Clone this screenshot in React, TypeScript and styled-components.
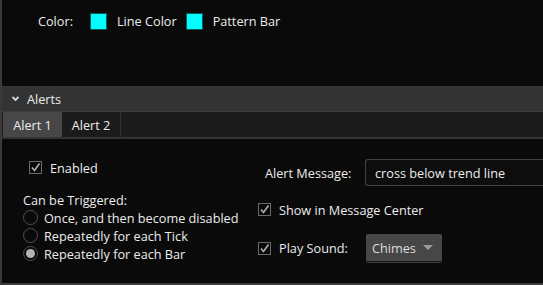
import React from 'react';
import styled, { createGlobalStyle } from 'styled-components';

const GlobalStyle = createGlobalStyle`
  html, body {
    margin: 0;
    padding: 0;
    background: #0a0a0a;
  }
  body {
    font-family: "Open Sans", "Noto Sans", sans-serif;
    font-size: 12.7px;
    color: #ececec;
  }
`;

const Frame = styled.div`
  width: 543px;
  height: 285px;
  box-sizing: border-box;
  border-left: 2px solid #3a3a3a;
  border-bottom: 2px solid #3a3a3a;
  background: #0a0a0a;
  display: flex;
  flex-direction: column;
  overflow: hidden;
`;

const ColorRow = styled.div`
  height: 86px;
  box-sizing: border-box;
  padding: 13px 0 0 36px;
  display: flex;
  align-items: flex-start;
`;

const ColorLabel = styled.span`
  line-height: 17px;
  margin-right: 17px;
`;

const Swatch = styled.div<{ $color: string }>`
  width: 17px;
  height: 17px;
  box-sizing: border-box;
  background: ${p => p.$color};
  border: 1px solid #0b5a5a;
  margin-right: 10px;
`;

const SwatchLabel = styled.span`
  line-height: 17px;
  margin-right: 9px;
`;

const SectionHeader = styled.div`
  height: 25px;
  background: #333333;
  display: flex;
  align-items: center;
  padding-left: 9px;
  gap: 7px;
  border-bottom: 1px solid #3d3d3d;
`;

const TabBar = styled.div`
  height: 25px;
  background: #1b1b1b;
  display: flex;
  border-bottom: 2px solid #333333;
`;

const Tab = styled.div<{ $active?: boolean }>`
  width: 59px;
  box-sizing: border-box;
  display: flex;
  align-items: center;
  justify-content: center;
  background: ${p => (p.$active ? '#474747' : 'transparent')};
  border-right: ${p => (p.$active ? 'none' : '1px solid #333')};
  margin-left: ${p => (p.$active ? '1px' : '0')};
`;

const Content = styled.div`
  display: flex;
  flex: 1;
`;

const LeftColumn = styled.div`
  width: 235px;
  padding: 21px 0 0 21px;
  display: flex;
  flex-direction: column;
`;

const RightColumn = styled.div`
  flex: 1;
  padding: 20px 0 0 0;
  display: flex;
  flex-direction: column;
`;

const CheckRow = styled.label<{ $indent?: number }>`
  display: flex;
  align-items: center;
  gap: 8px;
  height: 15px;
  padding-left: ${p => p.$indent ?? 0}px;
`;

const CheckBox = styled.span`
  width: 13px;
  height: 13px;
  box-sizing: border-box;
  border: 1px solid #6a6a6a;
  display: inline-flex;
  align-items: center;
  justify-content: center;
`;

const GroupTitle = styled.div`
  margin-top: 17px;
  line-height: 16px;
`;

const RadioRow = styled.div`
  display: flex;
  align-items: center;
  gap: 6px;
  height: 17px;
  margin-top: 1px;
`;

const Radio = styled.span<{ $checked?: boolean }>`
  width: 15px;
  height: 15px;
  box-sizing: border-box;
  border-radius: 50%;
  border: 1px solid #505050;
  display: inline-flex;
  align-items: center;
  justify-content: center;
  &::after {
    content: '';
    width: 9px;
    height: 9px;
    border-radius: 50%;
    background: ${p => (p.$checked ? '#b4b4b4' : 'transparent')};
  }
`;

const MessageRow = styled.div`
  display: flex;
  align-items: center;
`;

const FieldLabel = styled.span<{ $width: number; $pad?: number }>`
  width: ${p => p.$width}px;
  padding-left: ${p => p.$pad ?? 0}px;
  flex-shrink: 0;
`;

const TextBox = styled.div`
  flex: 1;
  height: 27px;
  box-sizing: border-box;
  border: 1px solid #424242;
  border-right: none;
  border-radius: 3px 0 0 3px;
  background: #0d0d0d;
  display: flex;
  align-items: center;
  padding-left: 9px;
`;

const SelectBox = styled.div`
  width: 76px;
  height: 28px;
  box-sizing: border-box;
  background: #474747;
  border-radius: 2px;
  border-bottom: 1px solid #1a1a1a;
  box-shadow: 0 1px 0 #3a3a3a;
  display: flex;
  align-items: center;
  justify-content: space-between;
  padding: 0 9px 0 6px;
  color: #dcdcdc;
`;

const Caret = styled.span`
  width: 0;
  height: 0;
  border-left: 5px solid transparent;
  border-right: 5px solid transparent;
  border-top: 5px solid #9a9a9a;
`;

const Check = () => (
  <CheckBox>
    <svg width="11" height="11" viewBox="0 0 11 11">
      <path d="M2 5.5 L4.5 8.5 L9.5 1.5" fill="none" stroke="#b0b0b0" strokeWidth="1.6" />
    </svg>
  </CheckBox>
);

const Chevron = () => (
  <svg width="9" height="9" viewBox="0 0 9 9">
    <path d="M1.5 3 L4.5 6 L7.5 3" fill="none" stroke="#d8d8d8" strokeWidth="1.8" />
  </svg>
);

const App: React.FC = () => {
  return (
    <>
      <GlobalStyle />
      <Frame>
        <ColorRow>
          <ColorLabel>Color:</ColorLabel>
          <Swatch $color="#00ffff" />
          <SwatchLabel>Line Color</SwatchLabel>
          <Swatch $color="#00ffff" />
          <SwatchLabel>Pattern Bar</SwatchLabel>
        </ColorRow>

        <SectionHeader>
          <Chevron />
          <span>Alerts</span>
        </SectionHeader>

        <TabBar>
          <Tab $active>Alert 1</Tab>
          <Tab>Alert 2</Tab>
        </TabBar>

        <Content>
          <LeftColumn>
            <CheckRow $indent={6}>
              <Check />
              Enabled
            </CheckRow>
            <GroupTitle>Can be Triggered:</GroupTitle>
            <RadioRow>
              <Radio />
              Once, and then become disabled
            </RadioRow>
            <RadioRow>
              <Radio />
              Repeatedly for each Tick
            </RadioRow>
            <RadioRow>
              <Radio $checked />
              Repeatedly for each Bar
            </RadioRow>
          </LeftColumn>

          <RightColumn>
            <MessageRow>
              <FieldLabel $width={100} $pad={7}>Alert Message:</FieldLabel>
              <TextBox>cross below trend line</TextBox>
            </MessageRow>
            <CheckRow style={{ marginTop: 16 }}>
              <Check />
              Show in Message Center
            </CheckRow>
            <MessageRow style={{ marginTop: 17 }}>
              <CheckRow>
                <Check />
                <FieldLabel $width={87}>Play Sound:</FieldLabel>
              </CheckRow>
              <SelectBox>
                Chimes
                <Caret />
              </SelectBox>
            </MessageRow>
          </RightColumn>
        </Content>
      </Frame>
    </>
  );
};

export default App;
